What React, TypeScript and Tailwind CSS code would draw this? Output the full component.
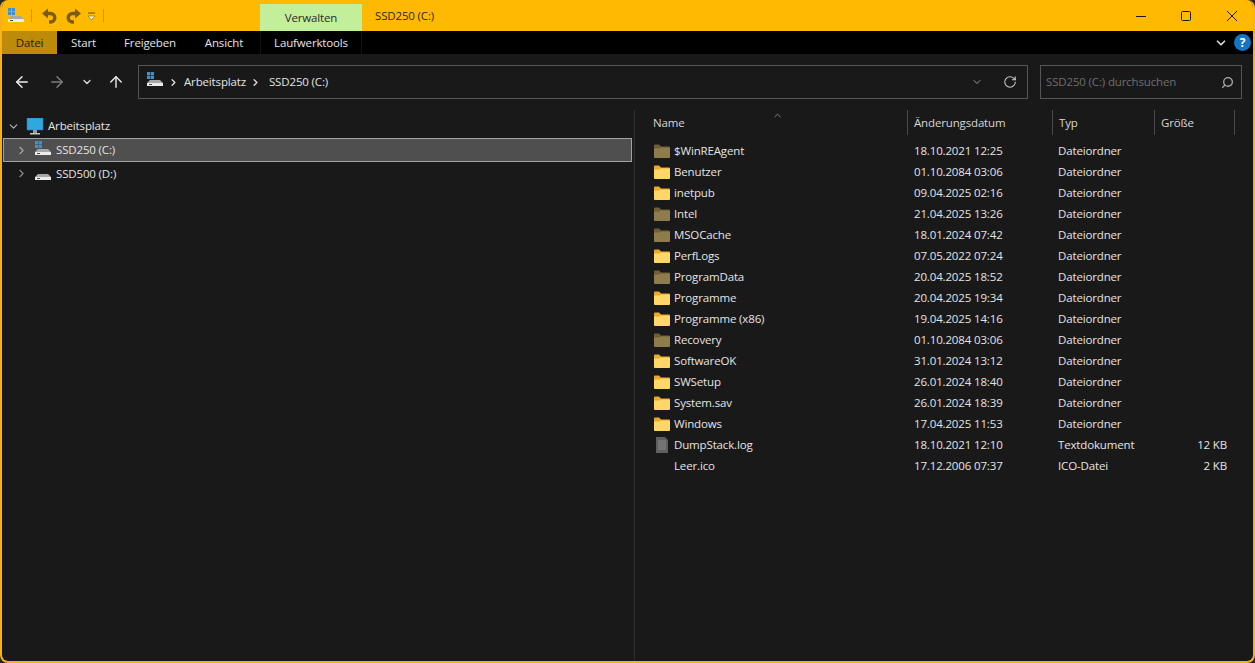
import { ArrowLeft, ArrowRight, ArrowUp, ChevronDown, ChevronRight, RotateCw, Search } from 'lucide-react';

const files = [
  { name: '$WinREAgent', date: '18.10.2021 12:25', type: 'Dateiordner', kind: 'hidden' },
  { name: 'Benutzer', date: '01.10.2084 03:06', type: 'Dateiordner', kind: 'folder' },
  { name: 'inetpub', date: '09.04.2025 02:16', type: 'Dateiordner', kind: 'folder' },
  { name: 'Intel', date: '21.04.2025 13:26', type: 'Dateiordner', kind: 'hidden' },
  { name: 'MSOCache', date: '18.01.2024 07:42', type: 'Dateiordner', kind: 'hidden' },
  { name: 'PerfLogs', date: '07.05.2022 07:24', type: 'Dateiordner', kind: 'folder' },
  { name: 'ProgramData', date: '20.04.2025 18:52', type: 'Dateiordner', kind: 'hidden' },
  { name: 'Programme', date: '20.04.2025 19:34', type: 'Dateiordner', kind: 'folder' },
  { name: 'Programme (x86)', date: '19.04.2025 14:16', type: 'Dateiordner', kind: 'folder' },
  { name: 'Recovery', date: '01.10.2084 03:06', type: 'Dateiordner', kind: 'hidden' },
  { name: 'SoftwareOK', date: '31.01.2024 13:12', type: 'Dateiordner', kind: 'folder' },
  { name: 'SWSetup', date: '26.01.2024 18:40', type: 'Dateiordner', kind: 'folder' },
  { name: 'System.sav', date: '26.01.2024 18:39', type: 'Dateiordner', kind: 'folder' },
  { name: 'Windows', date: '17.04.2025 11:53', type: 'Dateiordner', kind: 'folder' },
  { name: 'DumpStack.log', date: '18.10.2021 12:10', type: 'Textdokument', size: '12 KB', kind: 'text' },
  { name: 'Leer.ico', date: '17.12.2006 07:37', type: 'ICO-Datei', size: '2 KB', kind: 'none' },
];

function FolderIcon({ dim }: { dim: boolean }) {
  return (
    <svg width="16" height="14" viewBox="0 0 16 14" className="shrink-0">
      <path d="M0 1.500a1 1 0 0 1 1-1h4l2 2h8a1 1 0 0 1 1 1v2H0z" fill={dim ? '#6f5f36' : '#e9a92a'} />
      <path d="M0 4.500h5.500l1.500-1h8a1 1 0 0 1 1 1V13a1 1 0 0 1-1 1H1a1 1 0 0 1-1-1z" fill={dim ? '#8f7c4c' : '#ffd768'} />
    </svg>
  );
}

function TextFileIcon() {
  return (
    <svg width="16" height="16" viewBox="0 0 16 16" className="shrink-0">
      <path d="M2 0h9l3 3v13H2z" fill="#5f5f5f" />
      <path d="M4 4h8M4 6h8M4 8h8M4 10h8M4 12h8" stroke="#8c8c8c" strokeWidth="1" />
    </svg>
  );
}

function DriveIcon({ system }: { system: boolean }) {
  return (
    <svg width="16" height="16" viewBox="0 0 16 16" className="shrink-0">
      {system ? (
        <g fill="#3f8fd0">
          <rect x="0" y="0" width="3.250" height="3.250" />
          <rect x="3.750" y="0" width="3.250" height="3.250" />
          <rect x="0" y="3.750" width="3.250" height="3.250" />
          <rect x="3.750" y="3.750" width="3.250" height="3.250" />
        </g>
      ) : null}
      <path d="M3 8h10l3 3H0z" fill="#a8a8a8" />
      <rect x="0" y="11" width="16" height="3" fill="#ececec" />
      <rect x="2" y="12" width="3" height="1" fill="#4a4a4a" />
    </svg>
  );
}

function MonitorIcon() {
  return (
    <svg width="18" height="17" viewBox="0 0 18 17" className="shrink-0">
      <rect x="1" y="0" width="16" height="12" fill="#2fa8de" />
      <rect x="1" y="0" width="16" height="12" fill="none" stroke="#1b7fb8" strokeWidth="0.5" />
      <rect x="7" y="12" width="4" height="3" fill="#9a9a9a" />
      <rect x="4" y="15" width="10" height="1.5" fill="#c4c4c4" />
    </svg>
  );
}

function QuickAccess() {
  return (
    <div className="flex items-center">
      <div className="ml-[8px]">
        <DriveIcon system />
      </div>
      <div className="ml-[7px] h-[13px] w-px bg-[#cc9408]" />
      <svg width="16" height="16" viewBox="0 0 16 16" className="ml-[9px]">
        <path d="M7 0.500 1 5.500 7 10.500z" fill="#7a5c14" />
        <path d="M5 5.500h4.500a4 4 0 0 1 0 8.500H8" fill="none" stroke="#7a5c14" strokeWidth="3.500" />
      </svg>
      <svg width="16" height="16" viewBox="0 0 16 16" className="ml-[9px]">
        <path d="M9 0.500 15 5.500 9 10.500z" fill="#7a5c14" />
        <path d="M11 5.500H6.500a4 4 0 0 0 0 8.500H8" fill="none" stroke="#7a5c14" strokeWidth="3.500" />
      </svg>
      <svg width="9" height="9" viewBox="0 0 9 9" className="ml-[5px] mt-[2px]">
        <path d="M1 1h7" stroke="#6b5514" strokeWidth="1" />
        <path d="M1 4h7L4.500 8z" fill="#fff3c4" stroke="#6b5514" strokeWidth="0.5" />
      </svg>
      <div className="ml-[7px] h-[13px] w-px bg-[#cc9408]" />
    </div>
  );
}

function WindowButtons() {
  return (
    <div className="flex items-center text-[#1a1a1a]">
      <svg width="12" height="12" viewBox="0 0 12 12" className="mr-[33px]">
        <path d="M1 6.500h10" stroke="currentColor" strokeWidth="1" />
      </svg>
      <svg width="12" height="12" viewBox="0 0 12 12" className="mr-[34px]">
        <rect x="1.500" y="1.500" width="9" height="9" rx="1" fill="none" stroke="currentColor" strokeWidth="1" />
      </svg>
      <svg width="12" height="12" viewBox="0 0 12 12" className="mr-[17px]">
        <path d="M1 1l10 10M11 1 1 11" stroke="currentColor" strokeWidth="1" />
      </svg>
    </div>
  );
}

function Column({ label, width }: { label: string; width: string }) {
  return (
    <div className={`flex h-[25px] shrink-0 items-center border-r border-[#4a4a4a] pl-[6px] ${width}`}>
      {label}
    </div>
  );
}

export default function App() {
  return (
    <div className="h-[663px] w-[1255px] bg-[#262626]">
      <div
        className="flex h-[663px] w-[1255px] flex-col overflow-hidden rounded-[8px] border-x-2 border-b-2 border-[#f7b21a] bg-[#191919] text-[11.5px] tracking-[-0.15px] text-[#e4e4e4]"
        style={{ fontFamily: '"Open Sans", "Noto Sans", sans-serif' }}
      >
        <div className="-mx-[2px] flex h-[31px] shrink-0 items-end justify-between bg-[#ffb900]">
          <div className="flex h-full items-center">
            <QuickAccess />
            <div className="absolute left-[260px] top-[4px] flex h-[27px] w-[102px] items-center justify-center bg-[#c3ee9a] pt-[1px] text-[#2a2a2a]">
              Verwalten
            </div>
            <span className="absolute left-[375px] top-[7px] text-[#2a2a2a]">SSD250 (C:)</span>
          </div>
          <div className="flex h-full items-center">
            <WindowButtons />
          </div>
        </div>

        <div className="flex h-[23px] shrink-0 items-center justify-between bg-black">
          <div className="flex h-full items-center text-center">
            <div className="flex h-full w-[55px] items-center justify-center bg-[#bd8a0a] text-[#1f1a0a]">Datei</div>
            <div className="w-[53px]">Start</div>
            <div className="w-[80px]">Freigeben</div>
            <div className="mr-[2px] w-[68px]">Ansicht</div>
            <div className="flex h-full w-[102px] items-center justify-center border-x border-[#141414]">Laufwerktools</div>
          </div>
          <div className="flex items-center gap-[6px] pr-[2px]">
            <ChevronDown size={14} strokeWidth={3} className="text-[#d8d8d8]" />
            <div className="flex size-[17px] items-center justify-center rounded-full bg-[#1574c4] text-[12px] font-bold text-white">
              ?
            </div>
          </div>
        </div>

        <div className="flex h-[56px] shrink-0 items-center bg-[#191919]">
          <div className="flex w-[136px] shrink-0 items-center pl-[11px]">
            <ArrowLeft size={18} strokeWidth={1.9} className="text-[#eeeeee]" />
            <ArrowRight size={18} strokeWidth={1.9} className="ml-[17px] text-[#7d7d7d]" />
            <ChevronDown size={12} strokeWidth={2.5} className="ml-[15px] text-[#e0e0e0]" />
            <ArrowUp size={18} strokeWidth={1.9} className="ml-[14px] text-[#e8e8e8]" />
          </div>
          <div className="flex h-[34px] w-[890px] shrink-0 items-center border border-[#555555] pl-[8px]">
            <div className="-mt-[4px]">
              <DriveIcon system />
            </div>
            <ChevronRight size={11} strokeWidth={3} className="ml-[5px] text-[#dddddd]" />
            <span className="ml-[5px]">Arbeitsplatz</span>
            <ChevronRight size={11} strokeWidth={3} className="ml-[4px] text-[#dddddd]" />
            <span className="ml-[8px]">SSD250 (C:)</span>
            <ChevronDown size={12} strokeWidth={1.5} className="ml-auto mr-[20px] text-[#c4c4c4]" />
            <RotateCw size={14} strokeWidth={1.75} className="mr-[10px] text-[#cccccc]" />
          </div>
          <div className="ml-[12px] flex h-[34px] w-[202px] shrink-0 items-center justify-between border border-[#555555] pl-[5px] pr-[7px] text-[#6e6e6e]">
            <span>SSD250 (C:) durchsuchen</span>
            <Search size={13} strokeWidth={2.5} className="-scale-x-100 text-[#a8a8a8]" />
          </div>
        </div>

        <div className="flex min-h-0 flex-1">
          <div className="w-[633px] shrink-0 border-r border-[#2e2e2e] pt-[6px]">
            <div className="flex h-[20px] items-center pl-[5px]">
              <ChevronDown size={13} strokeWidth={2} className="text-[#b8b8b8]" />
              <div className="ml-[6px]">
                <MonitorIcon />
              </div>
              <span className="ml-[4px]">Arbeitsplatz</span>
            </div>
            <div className="ml-[1px] mr-[2px] mt-[2px] flex h-[24px] items-center border border-[#a3a3a3] bg-[#4f4f4f] pl-[11px]">
              <ChevronRight size={13} strokeWidth={2} className="text-[#a8a8a8]" />
              <div className="-mt-[3px] ml-[7px]">
                <DriveIcon system />
              </div>
              <span className="ml-[5px]">SSD250 (C:)</span>
            </div>
            <div className="flex h-[23px] items-center pl-[13px]">
              <ChevronRight size={13} strokeWidth={2} className="text-[#8c8c8c]" />
              <div className="ml-[7px]">
                <DriveIcon system={false} />
              </div>
              <span className="ml-[5px]">SSD500 (D:)</span>
            </div>
          </div>

          <div className="relative min-w-0 flex-1">
            <ChevronDown size={11} strokeWidth={1.5} className="absolute left-[137px] top-0 rotate-180 text-[#b0b0b0]" />
            <div className="flex pl-[14px] text-[#d6d6d6]">
              <div className="flex h-[25px] w-[259px] shrink-0 items-center border-r border-[#4a4a4a] pl-[4px]">Name</div>
              <Column label="Änderungsdatum" width="w-[145px]" />
              <Column label="Typ" width="w-[102px]" />
              <Column label="Größe" width="w-[80px]" />
            </div>
            <div className="mt-[5px] pl-[19px]">
              {files.map((file) => (
                <div key={file.name} className="flex h-[21px] items-center">
                  <div className="flex w-[260px] shrink-0 items-center gap-[4px]">
                    {file.kind === 'text' ? (
                      <TextFileIcon />
                    ) : file.kind === 'none' ? (
                      <div className="size-[16px] shrink-0" />
                    ) : (
                      <FolderIcon dim={file.kind === 'hidden'} />
                    )}
                    <span>{file.name}</span>
                  </div>
                  <div className="w-[144px] shrink-0">{file.date}</div>
                  <div className="w-[102px] shrink-0">{file.type}</div>
                  <div className="w-[67px] shrink-0 text-right">{file.size}</div>
                </div>
              ))}
            </div>
          </div>
        </div>
      </div>
    </div>
  );
}
